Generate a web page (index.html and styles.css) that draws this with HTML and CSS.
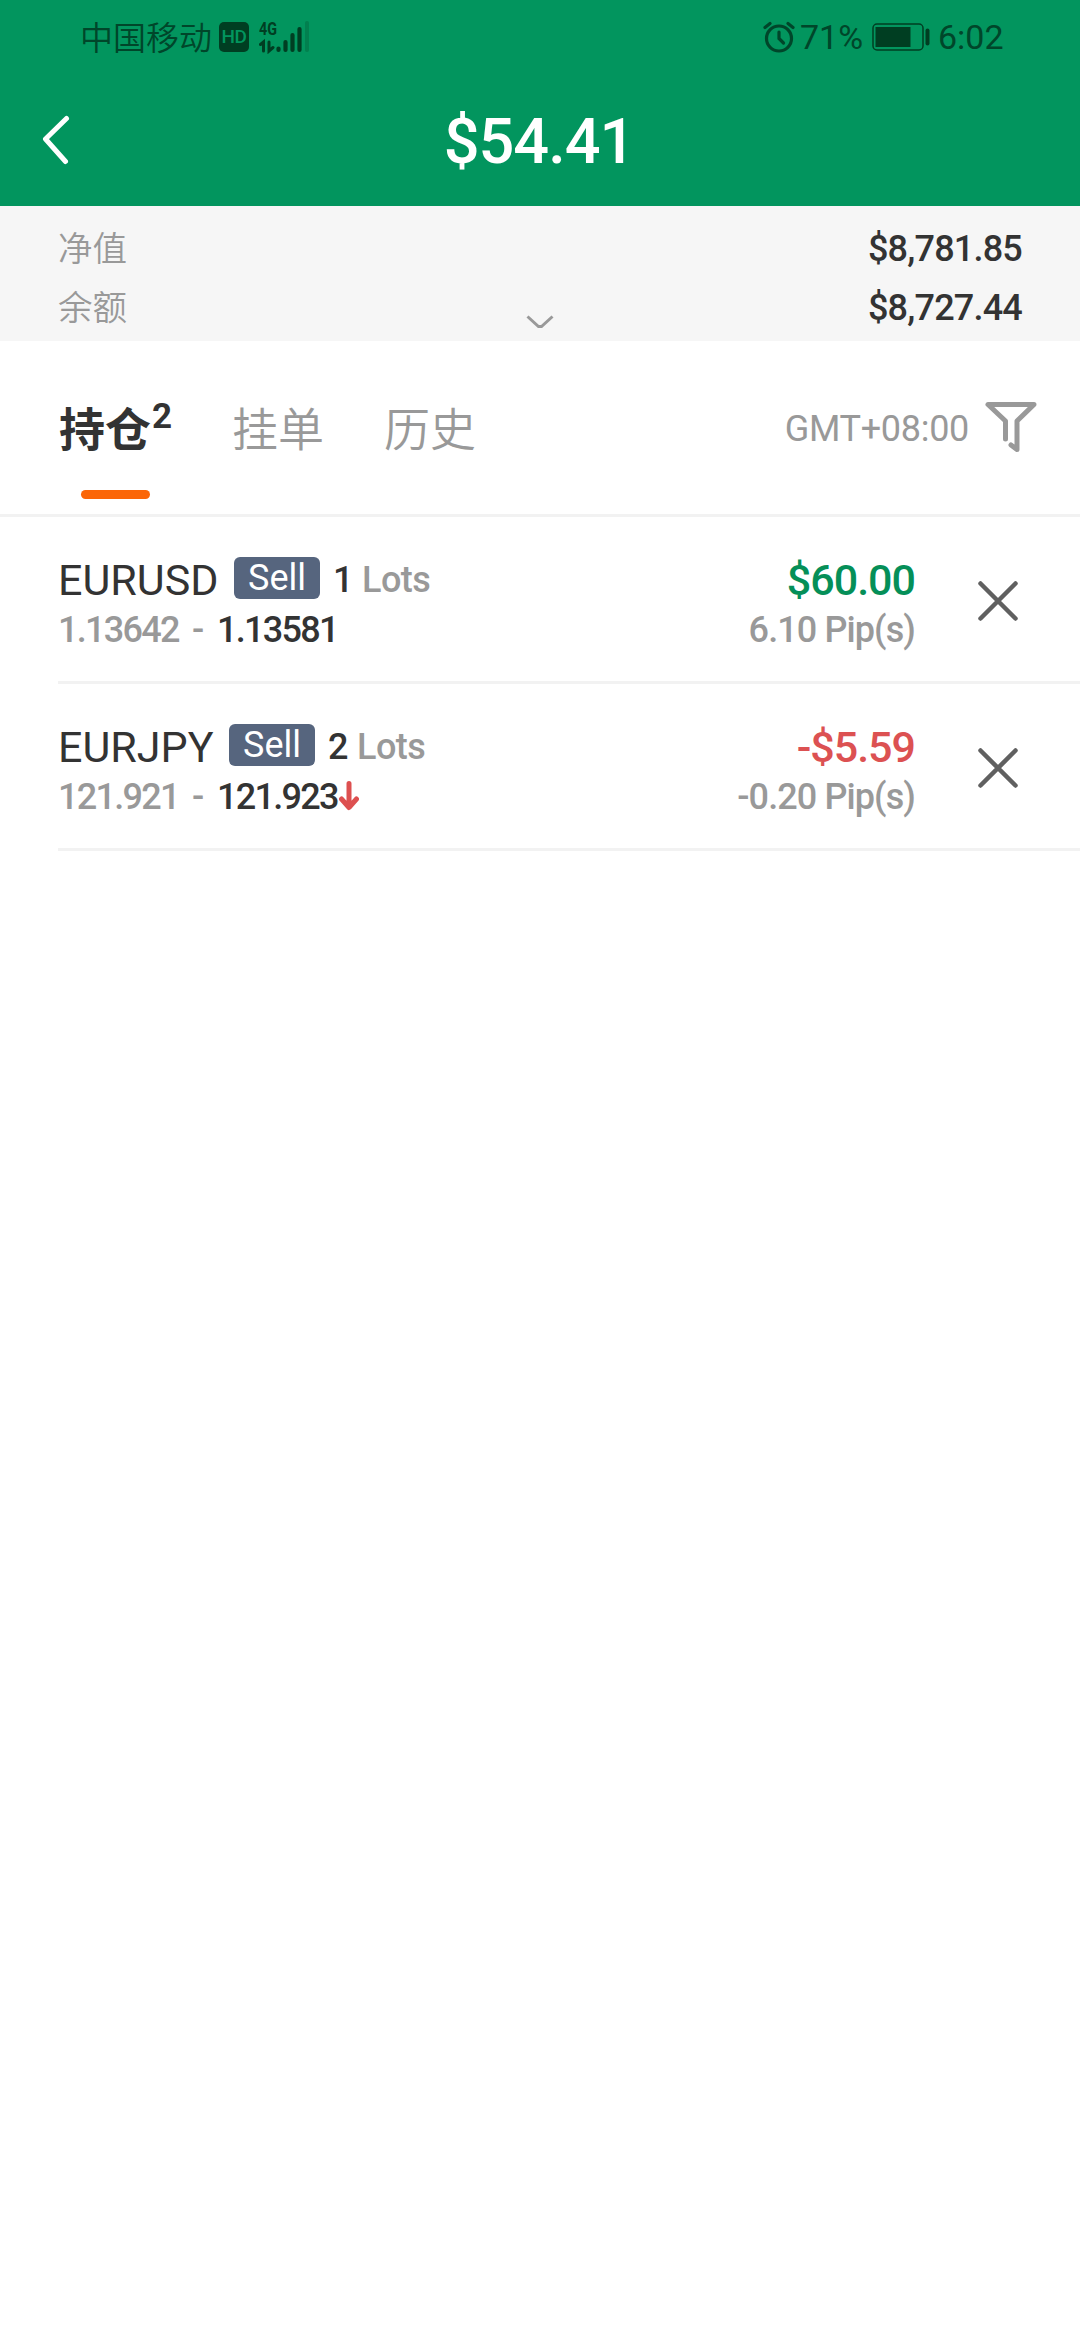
FILE: index.html
```html
<!DOCTYPE html>
<html lang="zh-CN">
<head>
<meta charset="utf-8">
<title>持仓</title>
<link rel="stylesheet" href="styles.css">
</head>
<body>
<header class="header">
  <div class="status">
    <div class="status-left">
      <span class="carrier">中国移动</span>
      <span class="hd">HD</span>
      <svg class="signal" width="52" height="38" viewBox="0 -4 52 38">
        <text class="net" x="0" y="15" textLength="18" lengthAdjust="spacingAndGlyphs">4G</text>
        <path class="stroke" d="M1.500 24.500L4.500 22V31M10 22V31L14 27.500" stroke-width="3" stroke-linecap="round"/>
        <path class="stroke" d="M19.500 28.500V30M26.500 22V30M33.500 15V30M40.500 9V30" stroke-width="4.200" stroke-linecap="round"/>
        <path class="faint" d="M48 3V30" stroke-width="4" stroke-linecap="round"/>
      </svg>
    </div>
    <div class="status-right">
      <svg class="alarm" width="32" height="32" viewBox="0 0 32 32">
        <circle cx="16" cy="17.500" r="12.500" stroke-width="3.200"/>
        <path d="M2 6.500L7 2.500M30 6.500L25 2.500" stroke-width="3.200" stroke-linecap="round"/>
        <path d="M16 11V17.500L20.500 22" stroke-width="3.200" stroke-linecap="round"/>
      </svg>
      <span class="percent">71%</span>
      <svg class="battery" width="58" height="28" viewBox="0 0 58 28">
        <rect class="stroke" x="1" y="1" width="50" height="26" rx="4" stroke-width="1.500"/>
        <rect class="solid" x="3.500" y="4" width="35" height="20"/>
        <rect class="solid" x="53.500" y="5.500" width="4" height="17" rx="2"/>
      </svg>
      <span class="time">6:02</span>
    </div>
  </div>
  <div class="titlebar">
    <svg class="back" width="28" height="50" viewBox="0 0 28 50"><path d="M24.500 3.500L3.500 24L23.500 46.500"/></svg>
    <h1 class="title">$54.41</h1>
  </div>
</header>

<section class="summary">
  <div class="summary-row"><span class="label">净值</span><span class="num">$8,781.85</span></div>
  <div class="summary-row"><span class="label">余额</span><span class="num">$8,727.44</span></div>
  <svg class="expand" width="28" height="14" viewBox="0 0 28 14"><path d="M1.500 1.500L12.500 11.500H15.500L26.500 1.500"/></svg>
</section>

<nav class="tabs">
  <div class="tab active">持仓<span class="count">2</span></div>
  <div class="tab">挂单</div>
  <div class="tab">历史</div>
  <div class="zone">GMT+08:00</div>
  <svg class="filter" width="52" height="54" viewBox="0 0 52 54"><path d="M20.500 38V20L3 3.500H49L32 20V48.500L26 44"/></svg>
</nav>

<main class="orders">
  <article class="order">
    <div class="info">
      <div class="line1"><span class="symbol usd">EURUSD</span><span class="side">Sell</span><span class="qty">1</span><span class="unit">Lots</span></div>
      <div class="line2"><span class="open">1.13642</span><span class="dash">-</span><span class="now">1.13581</span></div>
    </div>
    <div class="result"><div class="profit up">$60.00</div><div class="pips">6.10 Pip(s)</div></div>
    <svg class="close" width="42" height="42" viewBox="0 0 42 42"><path d="M3.500 3.500L38.500 38.500M38.500 3.500L3.500 38.500"/></svg>
  </article>
  <article class="order">
    <div class="info">
      <div class="line1"><span class="symbol jpy">EURJPY</span><span class="side">Sell</span><span class="qty">2</span><span class="unit">Lots</span></div>
      <div class="line2"><span class="open">121.921</span><span class="dash">-</span><span class="now">121.923</span><svg class="arrow" width="20" height="30" viewBox="0 0 20 30"><path d="M10 2.500V26M2.500 18L10 26.500L17.500 18"/></svg></div>
    </div>
    <div class="result"><div class="profit down">-$5.59</div><div class="pips">-0.20 Pip(s)</div></div>
    <svg class="close" width="42" height="42" viewBox="0 0 42 42"><path d="M3.500 3.500L38.500 38.500M38.500 3.500L3.500 38.500"/></svg>
  </article>
</main>
</body>
</html>
```
FILE: styles.css
```css
* { box-sizing: border-box; }
body {
  margin: 0;
  width: 1080px;
  min-height: 2340px;
  background: #fff;
  color: #333;
  font-family: Roboto, "Noto Sans CJK SC", sans-serif;
  white-space: nowrap;
}
svg { display: block; flex: none; fill: none; }

.header { height: 206px; background: #02955e; }
.status {
  height: 74px;
  padding: 0 75px 0 80px;
  display: flex;
  justify-content: space-between;
  align-items: center;
  color: #00462a;
}
.status-left, .status-right { display: flex; align-items: center; }
.carrier {
  width: 139px;
  padding-bottom: 3px;
  font: 350 33px/40px "Noto Sans CJK SC", sans-serif;
}
.hd {
  width: 30px;
  height: 30px;
  margin: 0 10px 0 0;
  border-radius: 5px;
  background: #003e22;
  color: #02955e;
  font: 500 19px/30px Roboto, sans-serif;
  letter-spacing: -.500px;
  text-align: center;
}
.signal { margin-top: -4px; }
.net { fill: #003e22; font: 700 19px Roboto, sans-serif; }
.signal .stroke, .battery .stroke { stroke: #003e22; }
.faint { stroke: #02804f; }
.alarm { stroke: #00462a; }
.percent { width: 77px; padding-left: 5px; font-size: 34px; line-height: 40px; }
.battery { margin-right: 8px; }
.battery .solid { fill: #003e22; }
.time { width: 67px; font-size: 34px; line-height: 40px; }

.titlebar {
  height: 132px;
  padding-left: 42px;
  display: grid;
  grid-template-columns: 28px 1fr;
  align-items: center;
}
.back path { stroke: #fff; stroke-width: 5; stroke-linecap: round; stroke-linejoin: round; }
.title { margin: 2px 72px 0 0; color: #fff; font-size: 63px; font-weight: 500; text-align: center; letter-spacing: -1px; }

.summary {
  position: relative;
  height: 135px;
  padding: 13px 58px 0;
  background: #f6f6f6;
}
.summary-row {
  height: 59px;
  display: flex;
  justify-content: space-between;
  align-items: center;
}
.label { padding-bottom: 6px; color: #999; font: 350 34.500px/50px "Noto Sans CJK SC", sans-serif; }
.num { font-size: 36px; font-weight: 500; letter-spacing: -.800px; }
.expand { position: absolute; left: 526px; bottom: 12px; }
.expand path { stroke: #999; stroke-width: 3; }

.tabs {
  height: 176px;
  padding: 0 43px 0 59px;
  border-bottom: 3px solid #f2f2f2;
  display: flex;
  align-items: center;
}
.tab {
  position: relative;
  margin-right: 60px;
  padding-bottom: 3px;
  color: #999;
  font: 350 46px/60px "Noto Sans CJK SC", sans-serif;
}
.active { color: #333; font-weight: 700; }
.count { font: 700 35px/40px Roboto, sans-serif; position: relative; top: -18px; margin-left: 1px; }
.active::after {
  content: "";
  position: absolute;
  left: 22px;
  top: 94px;
  width: 69px;
  height: 9px;
  border-radius: 5px;
  background: #fb6607;
}
.zone { margin-left: auto; margin-right: 16px; padding-top: 3px; color: #999; font-size: 36px; letter-spacing: -.300px; }
.filter path { stroke: #999; stroke-width: 5; stroke-linecap: round; stroke-linejoin: round; }

.orders { padding-left: 58px; }
.order {
  height: 167px;
  padding: 37px 61px 0 0;
  border-bottom: 3px solid #f2f2f2;
  display: flex;
  align-items: flex-start;
}
.info { flex: 1; }
.line1 { height: 52px; display: flex; align-items: center; }
.symbol { color: #333; font-size: 43px; }
.usd { width: 176px; }
.jpy { width: 171px; }
.side {
  width: 86px;
  height: 42px;
  margin-top: -5px;
  border-radius: 6px;
  background: #56657e;
  color: #fff;
  font-size: 36px;
  line-height: 42px;
  text-align: center;
}
.qty { width: 42px; padding-left: 13px; font-size: 36px; font-weight: 500; }
.unit { color: #999; font-size: 36px; font-weight: 500; letter-spacing: -.500px; }
.line2 {
  height: 48px;
  display: flex;
  align-items: center;
  font-size: 36px;
  font-weight: 500;
  letter-spacing: -1.700px;
}
.open { width: 134px; color: #999; }
.dash { width: 25px; color: #999; }
.now { width: 122px; }
.arrow { margin-top: -2px; }
.arrow path { stroke: #dd5050; stroke-width: 5; stroke-linecap: round; stroke-linejoin: round; }
.result { text-align: right; font-weight: 500; }
.profit { font-size: 43px; line-height: 52px; letter-spacing: -1px; }
.up { color: #058f58; }
.down { color: #dc5152; }
.pips { color: #999; font-size: 36px; line-height: 48px; letter-spacing: -.900px; }
.close { margin: 26px 0 0 62px; }
.close path { stroke: #606060; stroke-width: 4.500; stroke-linecap: round; }
```
